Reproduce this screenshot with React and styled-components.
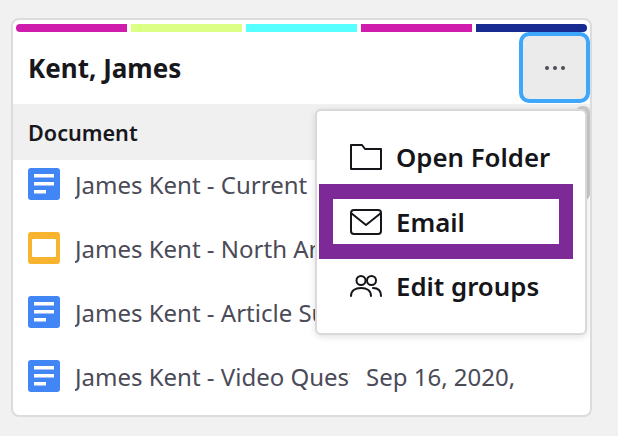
import React from "react";
import styled, { createGlobalStyle } from "styled-components";

const GlobalStyle = createGlobalStyle`
  html, body {
    margin: 0;
    background: #f1f1f1;
    font-family: "Noto Sans", "Open Sans", sans-serif;
  }
`;

const colors = ["#cf1cad", "#dcff85", "#57ffff", "#cf1cad", "#172b91"];

const docs = [
  { name: "James Kent - Current", kind: "doc" },
  { name: "James Kent - North America", kind: "slide" },
  { name: "James Kent - Article Summary", kind: "doc" },
  { name: "James Kent - Video Questions", kind: "doc", date: "Sep 16, 2020," },
];

function DocIcon() {
  return (
    <svg width="32" height="32" viewBox="0 0 32 32">
      <rect width="32" height="32" rx="3" fill="#4285f4" />
      <rect x="6" y="6" width="20" height="3.5" fill="#fff" />
      <rect x="6" y="14" width="20" height="3.5" fill="#fff" />
      <rect x="6" y="22" width="12" height="3.5" fill="#fff" />
    </svg>
  );
}

function SlideIcon() {
  return (
    <svg width="32" height="32" viewBox="0 0 32 32">
      <rect width="32" height="32" rx="3" fill="#f6b42f" />
      <rect x="4" y="7" width="24" height="18" rx="1" fill="#fff" />
    </svg>
  );
}

function FolderIcon() {
  return (
    <svg width="32" height="26" viewBox="0 0 32 26" fill="none" stroke="#15151a" strokeWidth="2" strokeLinejoin="round">
      <path d="M1 1h11l3 4h16v20H1z" />
    </svg>
  );
}

function MailIcon() {
  return (
    <svg width="32" height="26" viewBox="0 0 32 26" fill="none" stroke="#15151a" strokeWidth="2" strokeLinejoin="round">
      <rect x="1" y="1" width="30" height="24" rx="3" />
      <path d="M1 4l15 12L31 4" />
    </svg>
  );
}

function GroupIcon() {
  return (
    <svg width="32" height="22" viewBox="0 0 32 22" fill="none" stroke="#15151a" strokeWidth="2" strokeLinecap="round">
      <circle cx="11" cy="5.5" r="4.5" />
      <circle cx="21.5" cy="5.5" r="4.5" />
      <path d="M1 21c0-5 4-8 10-8s10 3 10 8" />
      <path d="M23 13c5 0 8 3 8 8" />
    </svg>
  );
}

const Card = styled.div`
  position: relative;
  box-sizing: border-box;
  width: 581px;
  height: 399px;
  margin: 18px 0 0 11px;
  background: #fff;
  border: 2px solid #dcdcdc;
  border-radius: 8px;
  overflow: hidden;
`;

const Bars = styled.div`
  display: flex;
  gap: 4px;
  padding: 4px 3px 0 3px;
`;

const Bar = styled.div`
  flex: 1;
  height: 8px;
  background: ${(p) => p.$color};
  &:first-child {
    border-radius: 4px 0 0 4px;
  }
  &:last-child {
    border-radius: 0 4px 4px 0;
  }
`;

const Header = styled.div`
  display: flex;
  align-items: center;
  justify-content: space-between;
  height: 72px;
  padding-left: 15px;
`;

const Title = styled.h1`
  margin: 0;
  font-size: 26px;
  font-weight: 700;
  color: #17171c;
`;

const MoreButton = styled.button`
  box-sizing: border-box;
  display: flex;
  align-items: center;
  justify-content: center;
  gap: 4px;
  width: 71px;
  height: 71px;
  margin-bottom: 1px;
  padding: 0;
  background: #ebebeb;
  border: 4px solid #3ea6fb;
  border-radius: 10px;
`;

const Dot = styled.span`
  width: 4px;
  height: 4px;
  border-radius: 50%;
  background: #4d4d57;
`;

const TableHead = styled.div`
  display: flex;
  align-items: center;
  height: 56px;
  padding-left: 15px;
  background: #f0f0f0;
  font-size: 21.6px;
  font-weight: 600;
  color: #17171c;
`;

const Rows = styled.div`
  display: flex;
  flex-direction: column;
  gap: 32px;
  padding: 8px 0 0 15px;
`;

const Row = styled.div`
  display: flex;
  align-items: center;
  height: 32px;
  font-size: 24px;
  color: #4b4b57;
`;

const Name = styled.span`
  width: 275px;
  margin-left: 15px;
  white-space: nowrap;
  overflow: hidden;
`;

const DateText = styled.span`
  margin-left: 16px;
  white-space: nowrap;
`;

const Scrollbar = styled.div`
  position: absolute;
  top: 86px;
  right: 0;
  width: 14px;
  height: 94px;
  background: #c8c8c8;
  border-radius: 6px;
`;

const Menu = styled.div`
  position: absolute;
  top: 89px;
  left: 302px;
  box-sizing: border-box;
  width: 272px;
  height: 226px;
  padding: 19px 12px 0 2px;
  background: #fff;
  border: 2px solid #d9d9d9;
  border-radius: 6px;
  box-shadow: 0 2px 6px rgba(0, 0, 0, 0.12);
`;

const Item = styled.div`
  box-sizing: border-box;
  display: flex;
  align-items: center;
  gap: 14px;
  height: ${(p) => (p.$focused ? "75px" : "54px")};
  padding-left: ${(p) => (p.$focused ? "17px" : "31px")};
  border: ${(p) => (p.$focused ? "15px solid #7d2a98" : "0")};
  border-width: ${(p) => (p.$focused ? "15px 14px" : "0")};
  font-size: 25.8px;
  font-weight: 600;
  color: #15151a;
`;

export default function App() {
  return (
    <>
      <GlobalStyle />
      <Card>
        <Bars>
          {colors.map((c, i) => (
            <Bar key={i} $color={c} />
          ))}
        </Bars>
        <Header>
          <Title>Kent, James</Title>
          <MoreButton aria-label="More">
            <Dot />
            <Dot />
            <Dot />
          </MoreButton>
        </Header>
        <TableHead>Document</TableHead>
        <Rows>
          {docs.map((d) => (
            <Row key={d.name}>
              {d.kind === "doc" ? <DocIcon /> : <SlideIcon />}
              <Name>{d.name}</Name>
              {d.date && <DateText>{d.date}</DateText>}
            </Row>
          ))}
        </Rows>
        <Scrollbar />
        <Menu>
          <Item>
            <FolderIcon />
            Open Folder
          </Item>
          <Item $focused>
            <MailIcon />
            Email
          </Item>
          <Item>
            <GroupIcon />
            Edit groups
          </Item>
        </Menu>
      </Card>
    </>
  );
}
